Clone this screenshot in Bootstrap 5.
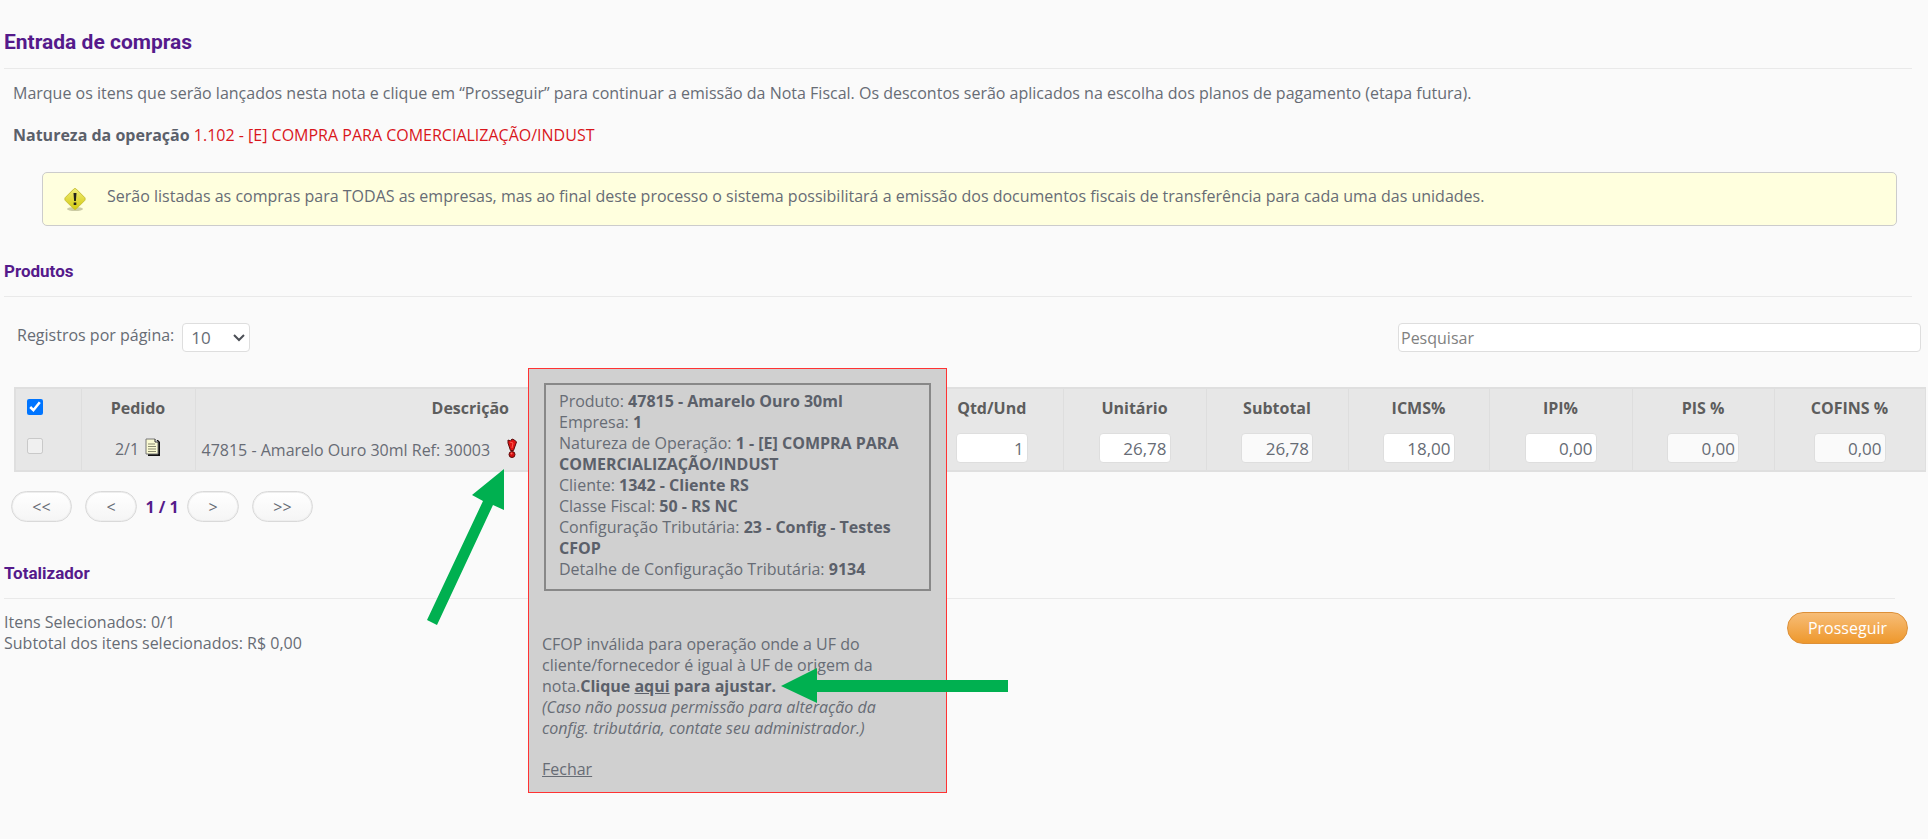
<!DOCTYPE html>
<html lang="pt-BR">
<head>
<meta charset="utf-8">
<meta name="viewport" content="width=device-width, initial-scale=1">
<title>Entrada de compras</title>
<link href="https://cdn.jsdelivr.net/npm/bootstrap@5.3.0/dist/css/bootstrap.min.css" rel="stylesheet">
<style>
body{font-family:"Open Sans",sans-serif;font-size:16px;line-height:21px;color:#676c75;background:#fafafa}
strong{font-weight:700;color:#5b606a}
.heading{font-family:Roboto,sans-serif;font-weight:700;color:#551a8b;margin:0;border-bottom:1px solid #e9e9e9}
h1.heading{font-size:21px;line-height:28px;padding-bottom:12px}
h2.heading{font-size:17px;line-height:24px;padding-bottom:13px}
.intro{margin:14px 0 0 13px}
.intro p{margin:0 0 21px}
.nature{color:#d9161c}
.notice{background:#ffffde;border:1px solid #ccc;border-radius:5px;margin:26px 31px 0 42px;padding:13px 20px;height:54px}
.products{margin-top:33px}
.toolbar{margin:26px 7px 0 17px}
.toolbar label{padding-top:2px}
.field{height:29px;border:1px solid #dedede;border-radius:4px;background:#fff;color:#676c75;font-size:17px}
.field::placeholder{color:#818181;opacity:1}
.per-page{width:68px;padding:0 8px;appearance:none}
.search{width:523px;padding:0 2px;font-size:16px}
.amount{width:72px;padding:0 3px;text-align:right;height:30px}
.amount:disabled{background:#fafafa}
.grid-wrap{margin:35px 4px 0 14px}
.grid-table{table-layout:fixed;width:100%;background:#e7e7e7;border:2px solid #dfdfdf;border-right-width:1px}
.grid-table th,.grid-table td{border-left:1px solid #dedede;text-align:center;white-space:nowrap}
.grid-table th{color:#5d5d5d;font-weight:700;height:40px}
.grid-table td{height:43px;padding-bottom:3px}
.grid-table th:first-child,.grid-table td:first-child{border-left:0;text-align:left;padding-left:11px}
.grid-table .caption-cell{padding:4px 0 0}
.grid-table .item{text-align:left;padding:4px 0 0 6px}
.grid-table .spare{border-left:0}
.tick{display:block;width:16px;height:16px;margin-bottom:4px}
.glyph{margin:0 0 7px 6px}
.pager{margin:19px 0 0 11px}
.pill{height:31px;border:1px solid #d9d9d9;border-radius:16px;background:linear-gradient(#fff,#f5f5f5);color:#676c75;padding:0;width:52px;line-height:24px;box-shadow:0 0 0 1px #eee inset}
.pill-wide{width:61px}
.pager .step{margin-left:13px}
.page-no{color:#551a8b;font-weight:700;width:50px;text-align:center;padding-top:6px}
.totals{margin:39px 33px 0 4px}
.summary{margin:13px 20px 0 4px}
.go{width:121px;height:32px;border:1px solid #dd9038;border-radius:16px;background:linear-gradient(#f7bd77,#ee982c);color:#fff;padding:0}
.tip{left:514px;top:-19px;width:419px;height:425px;background:#d0d0d0;border:1px solid #f33;z-index:5;padding:14px 15px 0 13px}
.tip-box{border:2px solid #888;height:208px;padding:6px 13px;margin-left:2px}
.tip a{color:inherit}
.tip-text{padding-top:43px}
.arrow-up{left:412px;top:82px;z-index:6}
.arrow-left{left:767px;top:281px;z-index:6}
</style>
</head>
<body>
<main class="min-vh-100">
  <header class="pt-4 ps-1 pe-3"><h1 class="heading mt-1">Entrada de compras</h1></header>
  <div class="intro">
    <p>Marque os itens que serão lançados nesta nota e clique em “Prosseguir” para continuar a emissão da Nota Fiscal. Os descontos serão aplicados na escolha dos planos de pagamento (etapa futura).</p>
    <p><strong>Natureza da operação</strong> <span class="nature">1.102 - [E] COMPRA PARA COMERCIALIZAÇÃO/INDUST</span></p>
  </div>
  <div class="notice d-flex" role="alert">
    <svg class="flex-shrink-0" width="24" height="26" viewBox="0 0 24 26" aria-hidden="true">
      <defs><linearGradient id="warn" x1="0" y1="0" x2="0" y2="1"><stop offset="0" stop-color="#f1ed78"/><stop offset="1" stop-color="#d2c90f"/></linearGradient></defs>
      <ellipse cx="12" cy="23" rx="8" ry="2" fill="#b5b58c" opacity=".7"/>
      <path d="M10.800 3q1.200-1 2.400 0l8.500 8.500q1 1.500 0 3L13.200 23q-1.200 1-2.400 0L2.300 14.500q-1-1.500 0-3z" fill="url(#warn)" stroke="#c9c138"/>
      <path d="M10.500 7h3l-.6 8h-1.800zM10.700 16.500h2.600v2.600h-2.600z" fill="#22221a"/>
    </svg>
    <span class="ms-3 ps-1">Serão listadas as compras para TODAS as empresas, mas ao final deste processo o sistema possibilitará a emissão dos documentos fiscais de transferência para cada uma das unidades.</span>
  </div>

  <section class="products ps-1 pe-3"><h2 class="heading">Produtos</h2></section>
  <div class="toolbar d-flex justify-content-between">
    <div class="d-flex"><label for="perPage" class="pe-1 me-1">Registros por página:</label>
      <div class="position-relative">
        <select id="perPage" class="field per-page"><option>10</option></select>
        <svg class="position-absolute top-50 end-0 translate-middle-y me-1 pe-none" width="14" height="10" viewBox="0 0 14 10" aria-hidden="true"><path d="M2 2l5 5 5-5" fill="none" stroke="#4c4f56" stroke-width="2"/></svg>
      </div>
    </div>
    <input class="field search" type="text" placeholder="Pesquisar" aria-label="Pesquisar">
  </div>

  <div class="grid-wrap position-relative">
    <table class="grid-table">
      <colgroup><col style="width:66px"><col style="width:114px"><col style="width:550px"><col style="width:176px"><col style="width:142px"><col style="width:143px"><col style="width:142px"><col style="width:141px"><col style="width:143px"><col style="width:142px"><col style="width:151px"></colgroup>
      <thead><tr>
        <th><input class="tick" type="checkbox" checked aria-label="Selecionar todos"></th><th>Pedido</th><th>Descrição</th><th class="spare"></th><th class="spare">Qtd/Und</th><th>Unitário</th><th>Subtotal</th><th>ICMS%</th><th>IPI%</th><th>PIS %</th><th>COFINS %</th>
      </tr></thead>
      <tbody><tr>
        <td><input class="tick" type="checkbox" disabled aria-label="Selecionar item"></td>
        <td class="caption-cell">2/1<svg class="glyph" width="16" height="19" viewBox="0 0 16 19" aria-hidden="true"><path d="M3 2h10l2 2v14H3z" fill="#111"/><path d="M1 1h9l3 3v12H1z" fill="#fafad2" stroke="#777"/><path d="M10 1v3h3" fill="#fff" stroke="#333"/><path d="M3 6h7M3 8.500h8M3 11h8M3 13.500h8" stroke="#8a8a70"/></svg></td>
        <td class="item">47815 - Amarelo Ouro 30ml Ref: 30003<svg class="glyph ms-3" width="12" height="22" viewBox="0 0 12 22" aria-hidden="true"><path d="M2 3l2.500 1L6 2l2.500 1 2 2-3 8.500h-3L2 6z" fill="#e01414" stroke="#5c0a0a"/><path d="M4 5l3 1-1 5" fill="none" stroke="#ff5a4d"/><circle cx="6" cy="17.500" r="3" fill="#d20f0f" stroke="#5c0a0a"/><circle cx="5.500" cy="16.500" r="1" fill="#ff6a5e"/></svg></td>
        <td class="spare"></td>
        <td class="spare"><input class="field amount" value="1" aria-label="Qtd/Und"></td>
        <td><input class="field amount" value="26,78" aria-label="Unitário"></td>
        <td><input class="field amount" value="26,78" disabled aria-label="Subtotal"></td>
        <td><input class="field amount" value="18,00" aria-label="ICMS%"></td>
        <td><input class="field amount" value="0,00" aria-label="IPI%"></td>
        <td><input class="field amount" value="0,00" disabled aria-label="PIS %"></td>
        <td><input class="field amount" value="0,00" disabled aria-label="COFINS %"></td>
      </tr></tbody>
    </table>

    <div class="tip position-absolute" role="dialog" aria-label="Aviso de CFOP">
      <div class="tip-box">
        <div>Produto: <strong>47815 - Amarelo Ouro 30ml</strong></div>
        <div>Empresa: <strong>1</strong></div>
        <div>Natureza de Operação: <strong>1 - [E] COMPRA PARA COMERCIALIZAÇÃO/INDUST</strong></div>
        <div>Cliente: <strong>1342 - Cliente RS</strong></div>
        <div>Classe Fiscal: <strong>50 - RS NC</strong></div>
        <div>Configuração Tributária: <strong>23 - Config - Testes CFOP</strong></div>
        <div>Detalhe de Configuração Tributária: <strong>9134</strong></div>
      </div>
      <div class="tip-text">CFOP inválida para operação onde a UF do<br>cliente/fornecedor é igual à UF de origem da<br>nota.<strong>Clique <a href="#">aqui</a> para ajustar.</strong><br><em>(Caso não possua permissão para alteração da<br>config. tributária, contate seu administrador.)</em></div>
      <a class="d-inline-block mt-3 pt-1" href="#">Fechar</a>
    </div>
    <svg class="arrow-up position-absolute" width="80" height="160" viewBox="0 0 80 160" aria-hidden="true"><path d="M78 0L46 26l11 6L1 151l10 5L67 36l11 5z" fill="#00b050"/></svg>
    <svg class="arrow-left position-absolute" width="228" height="36" viewBox="0 0 228 36" aria-hidden="true"><path d="M0 18L36 0v12h191v12H36v11z" fill="#00b050"/></svg>
  </div>

  <nav class="pager d-flex" aria-label="Paginação">
    <button class="pill pill-wide" type="button">&lt;&lt;</button>
    <button class="pill step" type="button">&lt;</button>
    <span class="page-no">1 / 1</span>
    <button class="pill" type="button">&gt;</button>
    <button class="pill pill-wide step" type="button">&gt;&gt;</button>
  </nav>

  <section class="totals"><h2 class="heading">Totalizador</h2></section>
  <div class="summary d-flex justify-content-between">
    <div>Itens Selecionados: 0/1<br>Subtotal dos itens selecionados: R$ 0,00</div>
    <button class="go" type="button">Prosseguir</button>
  </div>
</main>
<script src="https://cdn.jsdelivr.net/npm/bootstrap@5.3.0/dist/js/bootstrap.bundle.min.js"></script>
</body>
</html>
